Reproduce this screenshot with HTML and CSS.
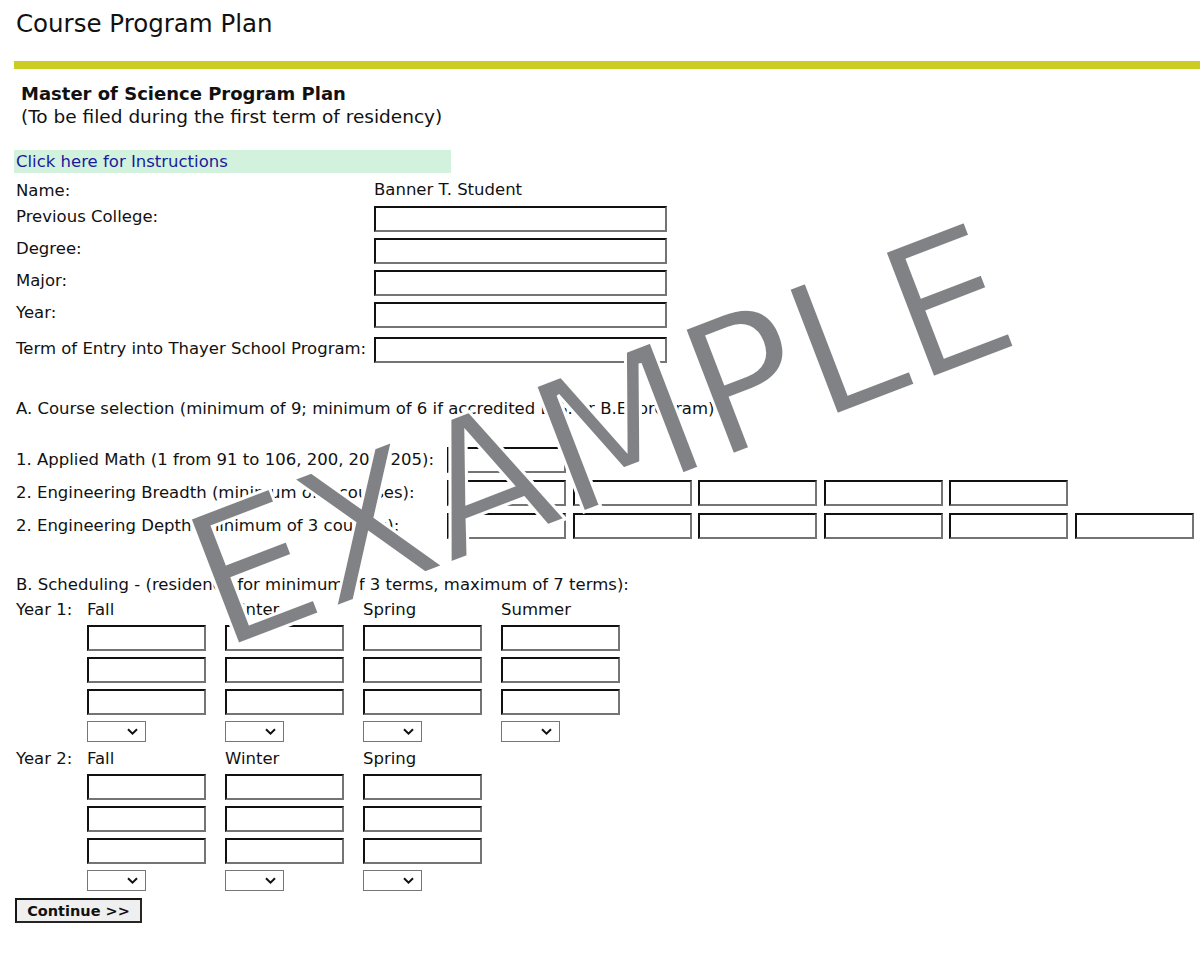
FILE: index.html
```html
<!DOCTYPE html>
<html>
<head>
<meta charset="utf-8">
<title>Course Program Plan</title>
<link rel="stylesheet" href="styles.css">
</head>
<body>
<h1 class="title">Course Program Plan</h1>
<div class="rule"></div>
<div class="intro">
  <div class="intro-title">Master of Science Program Plan</div>
  <div class="intro-sub">(To be filed during the first term of residency)</div>
</div>
<div class="instructions"><a href="#">Click here for Instructions</a></div>

<div class="info">
  <div class="label">Name:</div><div class="value">Banner T. Student</div>
  <div class="label">Previous College:</div><input class="field wide" type="text">
  <div class="label">Degree:</div><input class="field wide" type="text">
  <div class="label">Major:</div><input class="field wide" type="text">
  <div class="label">Year:</div><input class="field wide" type="text">
  <div class="label last">Term of Entry into Thayer School Program:</div><input class="field wide last" type="text">
</div>

<p class="section sec-a">A. Course selection (minimum of 9; minimum of 6 if accredited B.S. or B.E. program)</p>

<div class="courses">
  <div class="clabel">1. Applied Math (1 from 91 to 106, 200, 201, 205):</div>
  <div class="boxes"><input class="field small" type="text"></div>
  <div class="clabel">2. Engineering Breadth (minimum of 4 courses):</div>
  <div class="boxes">
    <input class="field small" type="text"><input class="field small" type="text"><input class="field small" type="text"><input class="field small" type="text"><input class="field small" type="text">
  </div>
  <div class="clabel">2. Engineering Depth (minimum of 3 courses):</div>
  <div class="boxes">
    <input class="field small" type="text"><input class="field small" type="text"><input class="field small" type="text"><input class="field small" type="text"><input class="field small" type="text"><input class="field small" type="text">
  </div>
</div>

<p class="section sec-b">B. Scheduling - (residence for minimum of 3 terms, maximum of 7 terms):</p>

<div class="sched">
  <div class="year">Year 1:</div><div>Fall</div><div>Winter</div><div>Spring</div><div>Summer</div>
  <div></div><input class="field small" type="text"><input class="field small" type="text"><input class="field small" type="text"><input class="field small" type="text">
  <div></div><input class="field small" type="text"><input class="field small" type="text"><input class="field small" type="text"><input class="field small" type="text">
  <div></div><input class="field small" type="text"><input class="field small" type="text"><input class="field small" type="text"><input class="field small" type="text">
  <div></div>
  <span class="select-wrap"><select class="term"><option></option></select><svg class="chev" viewBox="0 0 11 7"><path d="M1 1.2 L5.5 5.6 L10 1.2"/></svg></span>
  <span class="select-wrap"><select class="term"><option></option></select><svg class="chev" viewBox="0 0 11 7"><path d="M1 1.2 L5.5 5.6 L10 1.2"/></svg></span>
  <span class="select-wrap"><select class="term"><option></option></select><svg class="chev" viewBox="0 0 11 7"><path d="M1 1.2 L5.5 5.6 L10 1.2"/></svg></span>
  <span class="select-wrap"><select class="term"><option></option></select><svg class="chev" viewBox="0 0 11 7"><path d="M1 1.2 L5.5 5.6 L10 1.2"/></svg></span>
</div>

<div class="sched sched2">
  <div class="year">Year 2:</div><div>Fall</div><div>Winter</div><div>Spring</div><div></div>
  <div></div><input class="field small" type="text"><input class="field small" type="text"><input class="field small" type="text"><div></div>
  <div></div><input class="field small" type="text"><input class="field small" type="text"><input class="field small" type="text"><div></div>
  <div></div><input class="field small" type="text"><input class="field small" type="text"><input class="field small" type="text"><div></div>
  <div></div>
  <span class="select-wrap"><select class="term"><option></option></select><svg class="chev" viewBox="0 0 11 7"><path d="M1 1.2 L5.5 5.6 L10 1.2"/></svg></span>
  <span class="select-wrap"><select class="term"><option></option></select><svg class="chev" viewBox="0 0 11 7"><path d="M1 1.2 L5.5 5.6 L10 1.2"/></svg></span>
  <span class="select-wrap"><select class="term"><option></option></select><svg class="chev" viewBox="0 0 11 7"><path d="M1 1.2 L5.5 5.6 L10 1.2"/></svg></span>
  <div></div>
</div>

<button class="continue" type="button">Continue &gt;&gt;</button>

<div class="watermark">EXAMPLE</div>
</body>
</html>
```

FILE: styles.css
```css
html, body {
  margin: 0;
  padding: 0;
  background: #ffffff;
}

body {
  font-family: "DejaVu Sans", Verdana, sans-serif;
  font-size: 16.5px;
  line-height: 19px;
  color: #111111;
  padding-left: 14px;
  width: 1186px;
  height: 962px;
  overflow: hidden;
  position: relative;
}

.title {
  margin: 0;
  padding: 10px 0 0 2px;
  font-size: 24.5px;
  line-height: 28px;
  font-weight: normal;
  color: #111111;
}

.rule {
  margin-top: 23px;
  height: 8px;
  background: #cccc22;
}

.intro {
  margin-top: 13px;
  padding-left: 7px;
  font-size: 18px;
  line-height: 23px;
}

.intro-title {
  font-weight: bold;
}

.intro-sub {
  font-size: 18.5px;
}

.instructions {
  margin-top: 22px;
  width: 435px;
  height: 23px;
  line-height: 23px;
  padding-left: 2px;
  background: #d2f2de;
}

.instructions a {
  color: #1a1a9c;
  text-decoration: none;
}

.info {
  margin-top: 7px;
  padding-left: 2px;
  display: grid;
  grid-template-columns: 358px 293px;
  row-gap: 6px;
  align-items: start;
}

.label {
  padding-top: 1px;
}

.label.last {
  margin-top: 3px;
  padding-top: 2px;
}

.field {
  box-sizing: border-box;
  height: 26px;
  margin: 0;
  padding: 1px 2px;
  border-style: solid;
  border-width: 2px;
  border-color: #111111 #747474 #747474 #111111;
  background: #ffffff;
  font: 13px "DejaVu Sans", sans-serif;
}

.field.wide {
  width: 293px;
}

.field.last {
  margin-top: 3px;
}

.field.small {
  width: 119px;
}

.section {
  margin: 0;
  padding-left: 2px;
}

.sec-a {
  margin-top: 36px;
}

.courses {
  margin-top: 29px;
  padding-left: 2px;
  display: grid;
  grid-template-columns: 431px auto;
  row-gap: 7px;
  align-items: start;
}

.clabel {
  padding-top: 3px;
  white-space: nowrap;
}

.boxes {
  display: flex;
  gap: 6.6px;
}

.sec-b {
  margin-top: 36px;
}

.sched {
  margin-top: 6px;
  padding-left: 2px;
  display: grid;
  grid-template-columns: 52px repeat(4, 119px);
  column-gap: 19px;
  row-gap: 6px;
  align-items: start;
}

.sched2 {
  margin-top: 7px;
}

.year {
  white-space: nowrap;
}

.select-wrap {
  position: relative;
  display: block;
  width: 59px;
  height: 21px;
}

.term {
  display: block;
  box-sizing: border-box;
  width: 59px;
  height: 21px;
  margin: 0;
  border: 1px solid #767676;
  border-radius: 0;
  background-color: #ffffff;
  -webkit-appearance: none;
  appearance: none;
  font: 13px "DejaVu Sans", sans-serif;
}

.chev {
  position: absolute;
  right: 8px;
  top: 7px;
  width: 11px;
  height: 7px;
  pointer-events: none;
}

.chev path {
  fill: none;
  stroke: #111111;
  stroke-width: 2;
}

.continue {
  display: block;
  margin: 7px 0 0 1px;
  box-sizing: border-box;
  width: 127px;
  height: 25px;
  padding: 0;
  border: 2px solid #161616;
  border-bottom-color: #262626;
  border-right-color: #262626;
  background: #efefef;
  font-family: "DejaVu Sans", Verdana, sans-serif;
  font-weight: bold;
  font-size: 14.5px;
  color: #111111;
}

.watermark {
  position: absolute;
  left: 170px;
  top: 345px;
  width: 861px;
  line-height: 185px;
  font-size: 185px;
  text-align: center;
  color: #808285;
  -webkit-text-stroke: 3px #ffffff;
  transform: rotate(-21deg);
  white-space: nowrap;
  pointer-events: none;
}
```
